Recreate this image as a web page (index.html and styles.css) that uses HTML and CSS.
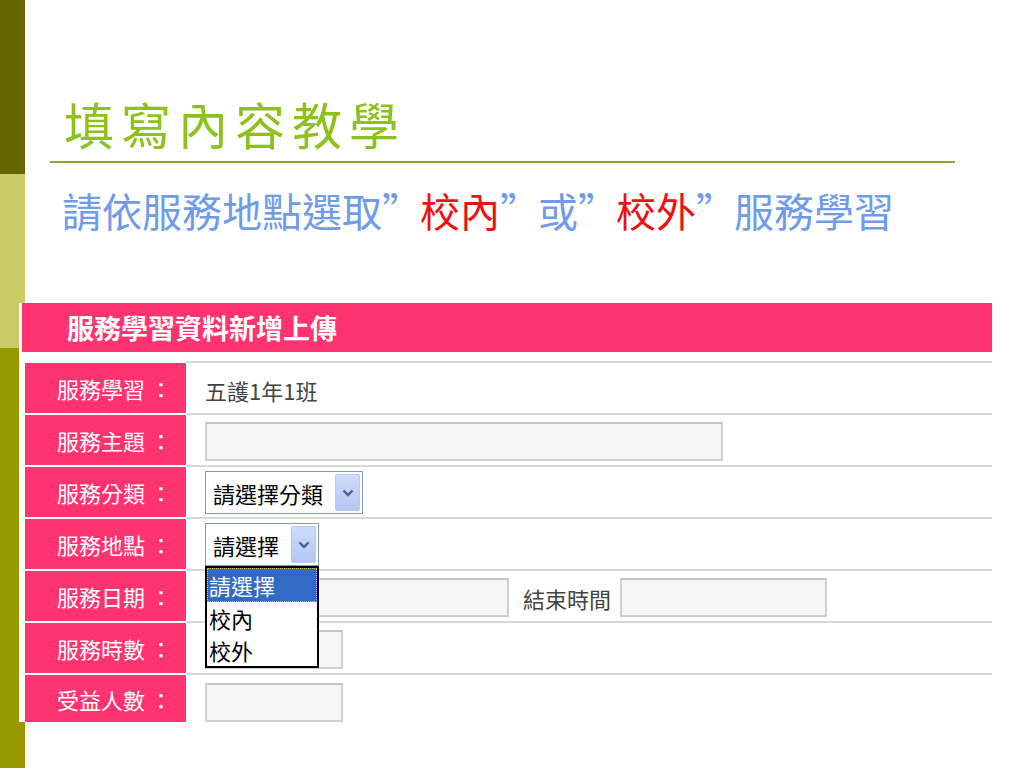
FILE: index.html
```html
<!DOCTYPE html>
<html lang="zh-Hant">
<head>
<meta charset="utf-8">
<title>填寫內容教學</title>
<link rel="stylesheet" href="styles.css">
</head>
<body>
<div class="slide">
  <h1 class="title">填寫內容教學</h1>
  <div class="rule"></div>
  <p class="subtitle">請依服務地點選取<span class="q">”</span><span class="red">校內</span><span class="q">”</span>或<span class="q">”</span><span class="red">校外</span><span class="q">”</span>服務學習</p>

  <div class="form">
    <div class="form-head">服務學習資料新增上傳</div>
    <div class="rows">
      <div class="row">
        <div class="label">服務學習 ：</div>
        <div class="value"><span class="plain">五護1年1班</span></div>
      </div>
      <div class="row">
        <div class="label">服務主題 ：</div>
        <div class="value"><span class="input w-topic"></span></div>
      </div>
      <div class="row">
        <div class="label">服務分類 ：</div>
        <div class="value">
          <div class="select w-cat"><span class="sel-text">請選擇分類</span><span class="sel-btn"><svg width="12" height="8" viewBox="0 0 12 8"><path d="M1.5 1.5 L6 6 L10.5 1.5" fill="none" stroke="#4a5f8a" stroke-width="2.4"/></svg></span></div>
        </div>
      </div>
      <div class="row">
        <div class="label">服務地點 ：</div>
        <div class="value">
          <div class="select w-loc"><span class="sel-text">請選擇</span><span class="sel-btn"><svg width="12" height="8" viewBox="0 0 12 8"><path d="M1.5 1.5 L6 6 L10.5 1.5" fill="none" stroke="#4a5f8a" stroke-width="2.4"/></svg></span>
            <ul class="dropdown">
              <li class="opt active">請選擇</li>
              <li class="opt">校內</li>
              <li class="opt">校外</li>
            </ul>
          </div>
        </div>
      </div>
      <div class="row">
        <div class="label">服務日期 ：</div>
        <div class="value"><span class="input w-start"></span><span class="plain end-label">結束時間</span><span class="input w-end"></span></div>
      </div>
      <div class="row">
        <div class="label">服務時數 ：</div>
        <div class="value"><span class="input w-small"></span></div>
      </div>
      <div class="row last">
        <div class="label">受益人數 ：</div>
        <div class="value"><span class="input w-small"></span></div>
      </div>
    </div>
  </div>
</div>
</body>
</html>
```
FILE: styles.css
```css
html, body {
  margin: 0;
  padding: 0;
}
body {
  width: 1024px;
  height: 768px;
  overflow: hidden;
  background-color: #ffffff;
  background-image: linear-gradient(to bottom, #666600 0, #666600 174px, #cccc66 174px, #cccc66 348px, #999900 348px, #999900 100%);
  background-size: 25px 100%;
  background-repeat: no-repeat;
  font-family: "Noto Sans CJK TC", "Noto Sans", sans-serif;
}
.slide {
  display: flex;
  flex-direction: column;
}
.title {
  margin: 98px 0 0 64px;
  font-size: 50px;
  line-height: 50px;
  font-weight: 400;
  letter-spacing: 7px;
  color: #8cc21a;
}
.rule {
  margin: 13px 0 0 50px;
  width: 905px;
  height: 2px;
  background: #9c9c2a;
}
.subtitle {
  margin: 27px 0 0 62px;
  font-size: 40px;
  line-height: 40px;
  color: #6f9be8;
  white-space: nowrap;
}
.subtitle .red {
  color: #ee1111;
}
.subtitle .q {
  display: inline-block;
  width: 0.95em;
  text-align: left;
}
.form {
  margin: 73px 0 0 19px;
  width: 973px;
  padding-left: 3px;
  box-sizing: border-box;
  background: #ffffff;
  position: relative;
}
.form-head {
  height: 49px;
  background: #ff3370;
  color: #ffffff;
  font-size: 27px;
  font-weight: 700;
  line-height: 49px;
  padding-left: 45px;
}
.rows {
  margin-top: 9px;
  padding-left: 3px;
  display: flex;
  flex-direction: column;
}
.row {
  display: grid;
  grid-template-columns: 161px 1fr;
  height: 52px;
}
.row.last {
  height: 49px;
}
.label {
  border-top: 2px solid #ffffff;
  background: #ff3370;
  color: #ffffff;
  font-size: 22px;
  padding-left: 32px;
  display: flex;
  align-items: center;
  white-space: pre;
}
.value {
  border-top: 2px solid #d8d8d8;
  padding: 3px 0 0 19px;
  display: flex;
  align-items: center;
}
.row.last .value {
  align-items: flex-start;
  padding-top: 8px;
}
.plain {
  font-size: 22px;
  color: #444444;
}
.input {
  display: block;
  height: 39px;
  box-sizing: border-box;
  border: 2px solid #cfcfcf;
  border-top-color: #c4c4c4;
  background: #f6f6f6;
}
.w-topic { width: 518px; }
.w-start { width: 304px; }
.w-end { width: 207px; }
.w-small { width: 138px; }
.end-label {
  margin: 0 9px 0 14px;
}
.select {
  position: relative;
  height: 43px;
  box-sizing: border-box;
  border: 1px solid #7f9db9;
  background: #ffffff;
  display: flex;
  align-items: center;
  justify-content: space-between;
  padding: 0 2px 0 7px;
  margin-top: -2px;
}
.w-cat { width: 158px; }
.w-loc { width: 114px; }
.sel-text {
  font-size: 22px;
  color: #000000;
}
.sel-btn {
  width: 25px;
  height: 37px;
  box-sizing: border-box;
  border: 1px solid #b7c9ef;
  border-radius: 2px;
  background: linear-gradient(to bottom, #cfdcfb, #b3c7f5);
  display: flex;
  align-items: center;
  justify-content: center;
}
.dropdown {
  position: absolute;
  left: -1px;
  top: 42px;
  width: 114px;
  margin: 0;
  padding: 0;
  list-style: none;
  box-sizing: border-box;
  border: 2px solid #000000;
  background: #ffffff;
  z-index: 5;
}
.opt {
  height: 32px;
  line-height: 32px;
  font-size: 22px;
  color: #000000;
  padding-left: 2px;
  box-sizing: border-box;
}
.opt.active {
  background: #316ac5;
  color: #ffffff;
  outline: 1px dotted #d8c070;
  outline-offset: -1px;
  height: 34px;
  line-height: 34px;
}
```
